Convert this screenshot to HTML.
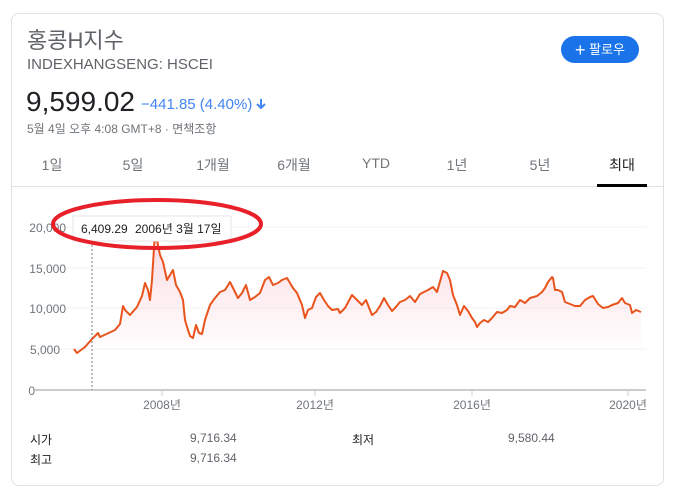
<!DOCTYPE html>
<html><head><meta charset="utf-8"><style>
body{margin:0;width:679px;height:492px;background:#fff;font-family:"Liberation Sans","Noto Sans CJK KR",sans-serif;position:relative;overflow:hidden}
.card{position:absolute;left:11px;top:13px;width:651px;height:471px;border:1px solid #dfe1e5;border-radius:8px;}
.a{position:absolute;white-space:nowrap}
</style></head><body>
<div class="card"></div>
<div class="a" style="left:27px;top:29px;font-size:22px;line-height:24px;color:#5f6368">홍콩H지수</div>
<div class="a" style="left:27px;top:56px;font-size:15px;line-height:17px;color:#5f6368">INDEXHANGSENG: HSCEI</div>
<div class="a" style="left:26px;top:86px;font-size:28px;color:#202124">9,599.02</div>
<div class="a" style="left:141px;top:96px;font-size:15px;color:#4285f4">−441.85 (4.40%)<svg width="12" height="12" viewBox="0 0 12 12" style="margin-left:3px;vertical-align:-1px"><path d="M6 1v8M2 6l4 4 4-4" stroke="#4285f4" stroke-width="2" fill="none"/></svg></div>
<div class="a" style="left:27px;top:120px;font-size:12px;color:#70757a">5월 4일 오후 4:08 GMT+8 · 면책조항</div>
<div class="a" style="left:561px;top:36px;width:78px;height:27px;background:#1a73e8;border-radius:14px;color:#fff;font-size:13px;line-height:27px;text-align:center"><span style="font-size:18px;vertical-align:-2px">+</span> 팔로우</div>
<div class="a" style="left:11px;top:186px;width:652px;height:1px;background:#dfe1e5"></div>
<div class="a" style="left:597px;top:184px;width:50px;height:3px;background:#000"></div>
<div style="position:absolute;top:155px;left:11px;font-size:14px;color:#70757a">
<span class="a" style="left:41px;transform:translateX(-50%)">1일</span>
<span class="a" style="left:122px;transform:translateX(-50%)">5일</span>
<span class="a" style="left:202px;transform:translateX(-50%)">1개월</span>
<span class="a" style="left:283px;transform:translateX(-50%)">6개월</span>
<span class="a" style="left:365px;transform:translateX(-50%)">YTD</span>
<span class="a" style="left:446px;transform:translateX(-50%)">1년</span>
<span class="a" style="left:529px;transform:translateX(-50%)">5년</span>
<span class="a" style="left:611px;transform:translateX(-50%);color:#202124">최대</span>
</div>
<svg class="a" style="left:0;top:0" width="679" height="492" font-family="Liberation Sans, Noto Sans CJK KR, sans-serif">
<defs><linearGradient id="g" x1="0" y1="0" x2="0" y2="1"><stop offset="0" stop-color="#e8315a" stop-opacity="0.18"/><stop offset="1" stop-color="#e8315a" stop-opacity="0"/></linearGradient></defs>
<g stroke="#f3f3f3" stroke-width="1"><line x1="36" y1="227" x2="646" y2="227"/><line x1="36" y1="268" x2="646" y2="268"/><line x1="36" y1="308" x2="646" y2="308"/><line x1="36" y1="349" x2="646" y2="349"/></g>
<line x1="35" y1="390" x2="646" y2="390" stroke="#ccc" stroke-width="2"/>
<g stroke="#ccc"><line x1="162" y1="390" x2="162" y2="396"/><line x1="315" y1="390" x2="315" y2="396"/><line x1="472" y1="390" x2="472" y2="396"/><line x1="628" y1="390" x2="628" y2="396"/></g>
<g font-size="12" fill="#70757a" text-anchor="end"><text x="66" y="232">20,000</text><text x="66" y="273">15,000</text><text x="66" y="313">10,000</text><text x="60" y="354">5,000</text><text x="35" y="395">0</text></g>
<g font-size="12" fill="#70757a" text-anchor="middle"><text x="162" y="409">2008년</text><text x="315" y="409">2012년</text><text x="472" y="409">2016년</text><text x="628" y="409">2020년</text></g>
<polygon fill="url(#g)" points="74,349 77,353 85,347 92,339 98,333 100,337 115,330 120,324 123,306 125,310 130,315 137,307 142,296 145,283 148,290 150,300 152,280 155,232 157,240 160,255 163,262 167,280 170,275 173,270 176,285 180,292 183,300 185,320 188,330 190,336 193,338 196,325 199,333 202,334 205,320 210,305 215,298 220,292 225,290 230,282 234,290 238,298 242,293 246,285 250,300 255,297 260,293 265,280 269,277 273,285 278,283 282,280 287,278 293,288 297,293 302,305 305,318 308,310 312,308 316,297 320,293 324,300 328,306 332,310 338,309 340,313 345,308 352,295 357,300 362,305 366,300 372,315 376,312 380,306 384,298 388,305 392,311 395,308 400,302 405,300 410,296 415,302 420,294 428,290 433,287 437,292 443,271 447,273 450,280 453,295 457,305 460,315 464,306 468,311 472,318 475,322 477,327 480,323 484,320 488,322 492,318 497,312 502,313 507,310 510,306 515,307 520,300 525,303 530,298 537,296 542,292 545,288 548,282 552,277 553,278 555,290 558,290 562,292 565,302 570,304 575,306 580,306 585,300 590,297 593,296 598,304 603,308 608,307 612,305 618,303 622,298 625,303 630,305 632,313 636,310 641,312 641,350 74,350"/>
<polyline fill="none" stroke="#e8541c" stroke-width="2" stroke-linejoin="round" points="74,349 77,353 85,347 92,339 98,333 100,337 115,330 120,324 123,306 125,310 130,315 137,307 142,296 145,283 148,290 150,300 152,280 155,232 157,240 160,255 163,262 167,280 170,275 173,270 176,285 180,292 183,300 185,320 188,330 190,336 193,338 196,325 199,333 202,334 205,320 210,305 215,298 220,292 225,290 230,282 234,290 238,298 242,293 246,285 250,300 255,297 260,293 265,280 269,277 273,285 278,283 282,280 287,278 293,288 297,293 302,305 305,318 308,310 312,308 316,297 320,293 324,300 328,306 332,310 338,309 340,313 345,308 352,295 357,300 362,305 366,300 372,315 376,312 380,306 384,298 388,305 392,311 395,308 400,302 405,300 410,296 415,302 420,294 428,290 433,287 437,292 443,271 447,273 450,280 453,295 457,305 460,315 464,306 468,311 472,318 475,322 477,327 480,323 484,320 488,322 492,318 497,312 502,313 507,310 510,306 515,307 520,300 525,303 530,298 537,296 542,292 545,288 548,282 552,277 553,278 555,290 558,290 562,292 565,302 570,304 575,306 580,306 585,300 590,297 593,296 598,304 603,308 608,307 612,305 618,303 622,298 625,303 630,305 632,313 636,310 641,312"/>
<line x1="92" y1="241" x2="92" y2="390" stroke="#777" stroke-dasharray="2,2"/>
<rect x="73" y="216" width="158" height="25" fill="#fff" stroke="#e5e5e5"/>
<text x="81" y="233" font-size="12" fill="#202124">6,409.29</text>
<text x="135" y="233" font-size="12" fill="#202124">2006년 3월 17일</text>
<ellipse cx="157" cy="224" rx="104" ry="24" fill="none" stroke="#e8202a" stroke-width="4"/>
</svg>
<div style="font-size:12px;color:#202124">
<div class="a" style="left:30px;top:431px">시가</div>
<div class="a" style="left:190px;top:431px;color:#5f6368">9,716.34</div>
<div class="a" style="left:352px;top:431px">최저</div>
<div class="a" style="left:508px;top:431px;color:#5f6368">9,580.44</div>
<div class="a" style="left:30px;top:451px">최고</div>
<div class="a" style="left:190px;top:451px;color:#5f6368">9,716.34</div>
</div>
</body></html>
